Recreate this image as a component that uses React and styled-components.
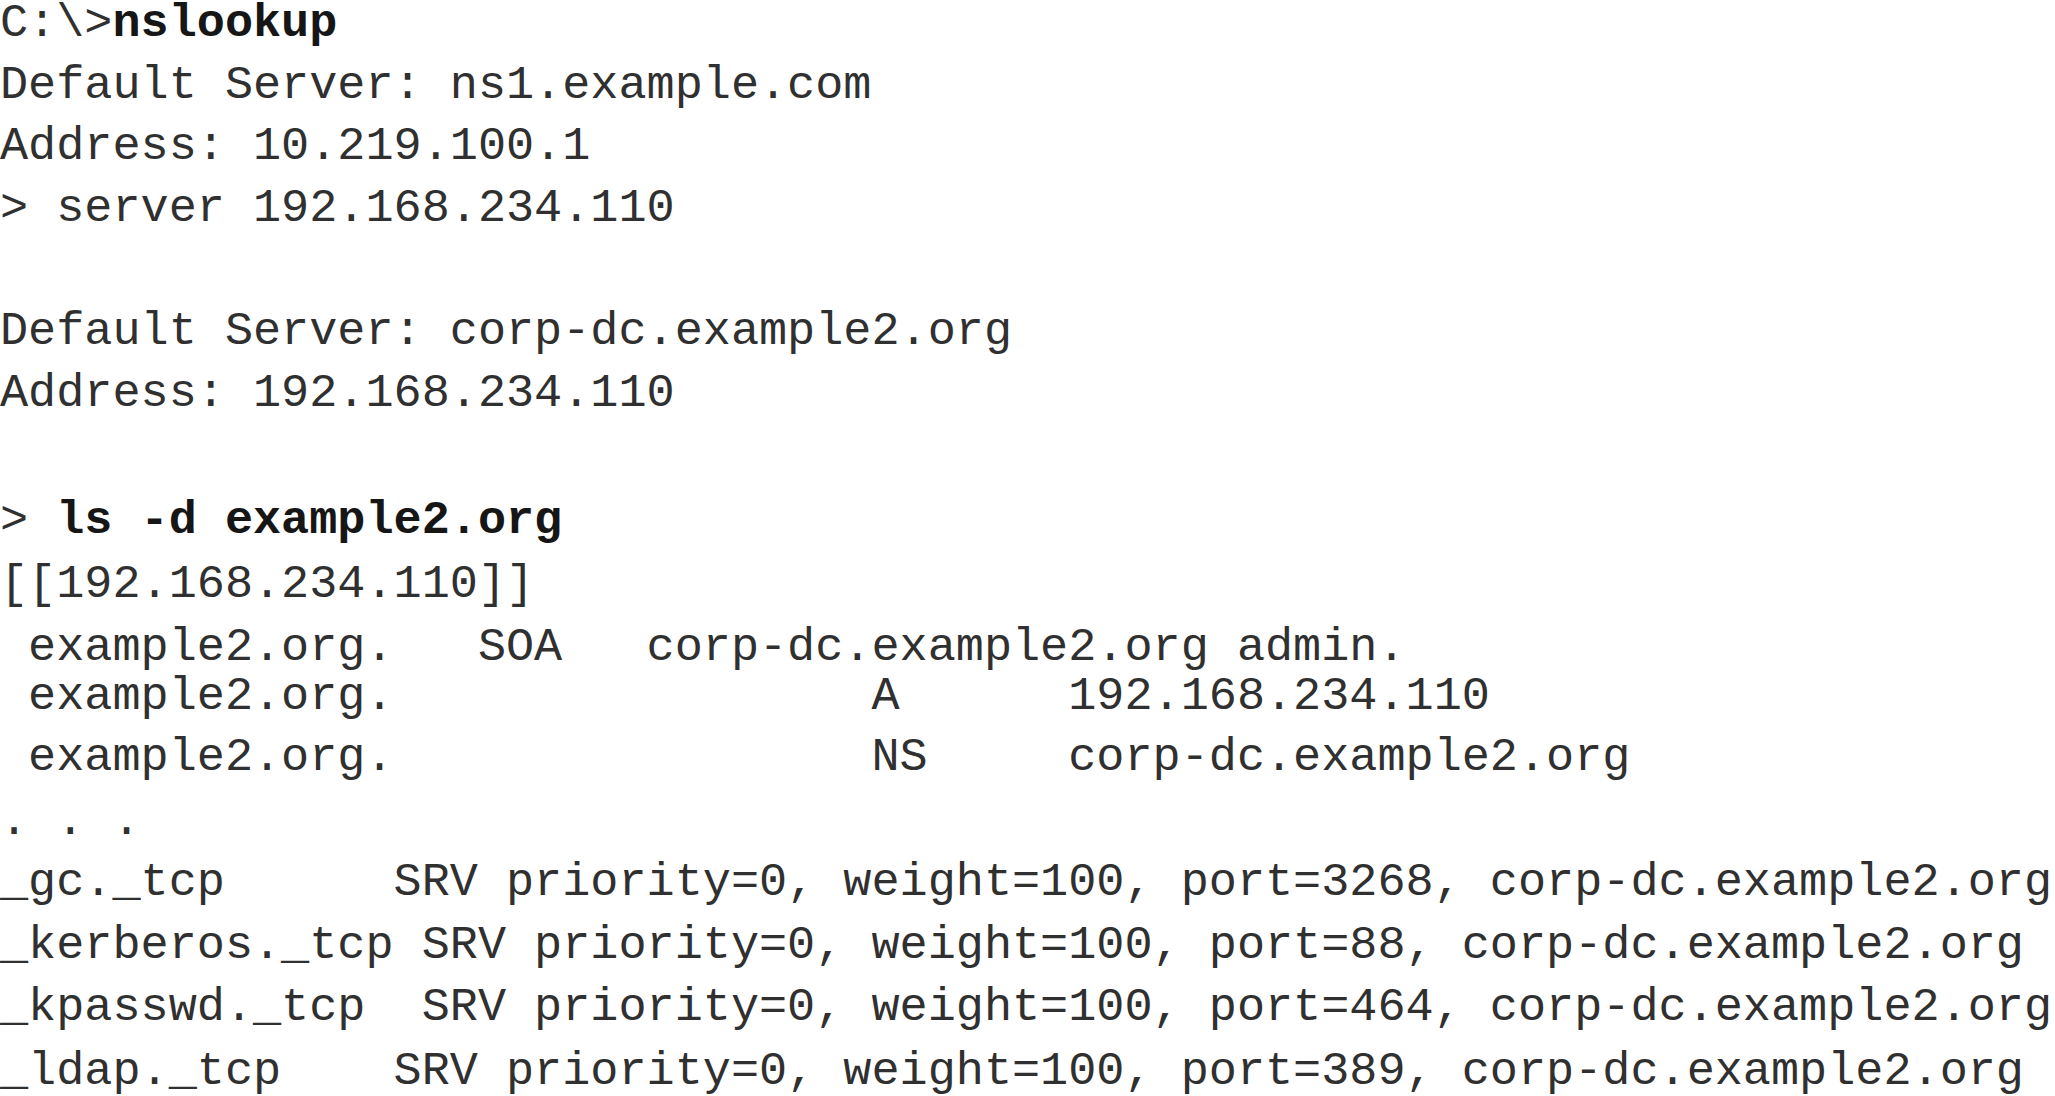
import React from 'react';
import styled, { createGlobalStyle } from 'styled-components';

const GlobalStyle = createGlobalStyle`
  html,
  body {
    margin: 0;
    padding: 0;
    background: #ffffff;
    overflow: hidden;
  }
`;

// shift = how far (px) the scanned line sits off the regular 61.65px grid
const lines = [
  { parts: ['C:\\>', { b: 'nslookup' }] },
  { parts: ['Default Server: ns1.example.com'] },
  { parts: ['Address: 10.219.100.1'] },
  { parts: ['> server 192.168.234.110'] },
  { parts: [] },
  { parts: ['Default Server: corp-dc.example2.org'] },
  { parts: ['Address: 192.168.234.110'] },
  { parts: [] },
  { parts: ['> ', { b: 'ls -d example2.org' }], shift: 4 },
  { parts: ['[[192.168.234.110]]'], shift: 6 },
  { parts: [' example2.org.   SOA   corp-dc.example2.org admin.'], shift: 8 },
  { parts: [' example2.org.                 A      192.168.234.110'], shift: -5 },
  { parts: [' example2.org.                 NS     corp-dc.example2.org'], shift: -6 },
  { parts: ['. . .'], shift: -3 },
  { parts: ['_gc._tcp      SRV priority=0, weight=100, port=3268, corp-dc.example2.org'], shift: -4 },
  { parts: ['_kerberos._tcp SRV priority=0, weight=100, port=88, corp-dc.example2.org'], shift: -3 },
  { parts: ['_kpasswd._tcp  SRV priority=0, weight=100, port=464, corp-dc.example2.org'], shift: -2 },
  { parts: ['_ldap._tcp    SRV priority=0, weight=100, port=389, corp-dc.example2.org'], shift: 0 },
];

const App = () => {
  return (
    <>
      <GlobalStyle />
      <Terminal>
        {lines.map((line, i) => {
          const prev = i > 0 ? lines[i - 1].shift || 0 : 0;
          const mt = (line.shift || 0) - prev;
          return (
            <Line key={i} $mt={mt}>
              {line.parts.length === 0
                ? '\u00a0'
                : line.parts.map((p, j) =>
                    typeof p === 'string' ? p : <Cmd key={j}>{p.b}</Cmd>
                  )}
            </Line>
          );
        })}
      </Terminal>
    </>
  );
};

export default App;

const Terminal = styled.div`
  display: flex;
  flex-direction: column;
  gap: 14.65px;
  width: 2055px;
  height: 1096px;
  font-family: 'Liberation Mono', 'Courier New', monospace;
  font-size: 46.85px;
  color: #303030;
  background: #ffffff;
`;

const Line = styled.div`
  line-height: 47px;
  height: 47px;
  white-space: pre;
  margin-top: ${(p) => p.$mt || 0}px;
`;

const Cmd = styled.span`
  font-weight: 700;
  color: #161616;
`;
